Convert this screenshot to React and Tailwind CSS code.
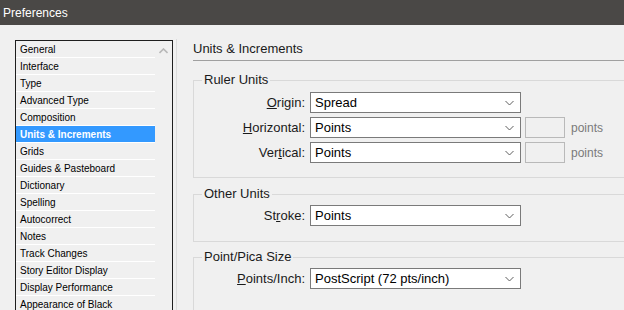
const sections = [
  'General',
  'Interface',
  'Type',
  'Advanced Type',
  'Composition',
  'Units & Increments',
  'Grids',
  'Guides & Pasteboard',
  'Dictionary',
  'Spelling',
  'Autocorrect',
  'Notes',
  'Track Changes',
  'Story Editor Display',
  'Display Performance',
  'Appearance of Black',
]

const ui = { fontFamily: '"Liberation Sans", Arial, sans-serif' }

function Chevron() {
  return (
    <svg width="9" height="6" viewBox="0 0 9 6" className="shrink-0">
      <path d="M0.5 1 L4.5 5 L8.5 1" fill="none" stroke="#5f5f5f" strokeWidth="1" />
    </svg>
  )
}

function Select({ value }) {
  return (
    <div className="w-[211px] h-[21px] shrink-0 border border-[#7a7a7a] bg-white flex items-center pl-[4px] pr-[6px]">
      <span className="flex-1 text-[13px] text-black leading-none">{value}</span>
      <Chevron />
    </div>
  )
}

function Row({ label, select, unit }) {
  return (
    <div className="flex items-center h-[21px]">
      <div className="w-[116px] shrink-0 pr-[5px] text-right text-[13px] text-[#1a1a1a]">{label}</div>
      <Select value={select} />
      {unit && (
        <>
          <div className="ml-[4px] w-[40px] h-[21px] shrink-0 border border-[#b9b9b9] bg-[#f0f0f0]" />
          <span className="ml-[6px] text-[12px] text-[#7a7a7a]">points</span>
        </>
      )}
    </div>
  )
}

function Group({ title, className, children }) {
  return (
    <fieldset className={`border border-[#d9d9d9] w-[460px] ${className}`}>
      <legend className="ml-[8px] px-[2px] text-[13px] leading-[16px] text-[#1a1a1a]">{title}</legend>
      {children}
    </fieldset>
  )
}

export default function App() {
  return (
    <div className="w-[624px] h-[310px] bg-[#f0f0f0] overflow-hidden flex flex-col" style={ui}>
      <div className="h-[25px] shrink-0 bg-[#4a4846] text-white text-[12px] flex items-center pl-[3px]">
        Preferences
      </div>

      <div className="flex flex-1 items-start">
        {/* category list */}
        <div className="ml-[15px] mt-[15px] w-[158px] shrink-0 border border-[#1e1e1e] border-b-0 bg-white flex">
          <div className="w-[139px] flex flex-col">
            {sections.map((s) => (
              <div
                key={s}
                className={`h-[17px] pl-[4px] border-b border-white flex items-center text-[10px] whitespace-nowrap ${
                  s === 'Units & Increments'
                    ? 'bg-[#3399ff] text-white font-bold'
                    : 'bg-[#f0f0f0] text-black'
                }`}
              >
                {s}
              </div>
            ))}
          </div>
          <div className="flex-1 bg-[#f0f0f0] flex justify-center pt-[7px] h-[270px]">
            <svg width="9" height="6" viewBox="0 0 9 6">
              <path d="M0.5 5 L4.5 1 L8.5 5" fill="none" stroke="#b8b8b8" strokeWidth="1.6" />
            </svg>
          </div>
        </div>
        <div className="ml-[3px] mt-[14px] w-px h-[280px] shrink-0 bg-[#dcdcdc]" />

        {/* settings */}
        <div className="ml-[16px] flex-1 min-w-0 flex flex-col">
          <div className="pt-[16px] pb-[3px] border-b border-[#a0a0a0] text-[13px] leading-[16px] text-[#1a1a1a] whitespace-nowrap">
            Units &amp; Increments
          </div>

          <Group title="Ruler Units" className="mt-[11px] pt-[4px] pb-[14px]">
            <div className="flex flex-col gap-[4px]">
              <Row label={<><u>O</u>rigin:</>} select="Spread" />
              <Row label={<><u>H</u>orizontal:</>} select="Points" unit />
              <Row label={<>Ver<u>t</u>ical:</>} select="Points" unit />
            </div>
          </Group>

          <Group title="Other Units" className="mt-[8px] pt-[3px] pb-[15px]">
            <Row label={<>St<u>r</u>oke:</>} select="Points" />
          </Group>

          <Group title="Point/Pica Size" className="mt-[7px] pt-[3px] pb-[40px]">
            <Row label={<><u>P</u>oints/Inch:</>} select="PostScript (72 pts/inch)" />
          </Group>
        </div>
      </div>
    </div>
  )
}
